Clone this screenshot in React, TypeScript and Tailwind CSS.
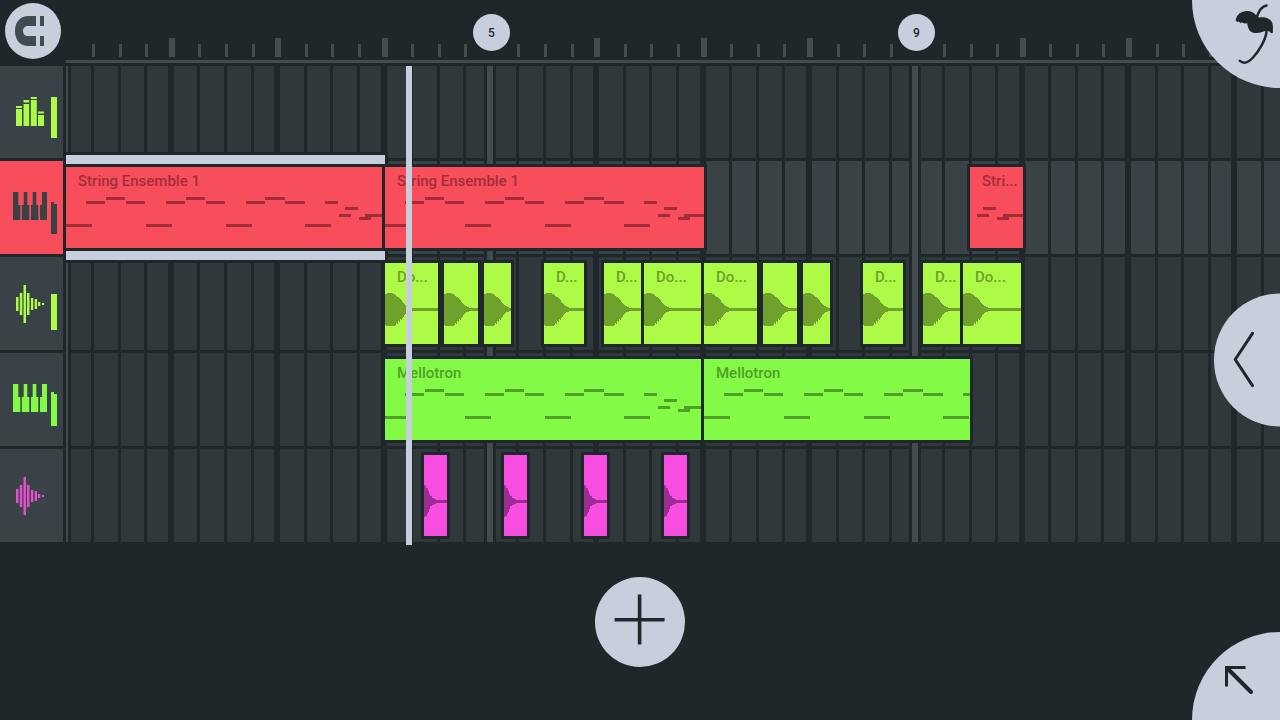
import { clsx } from 'clsx';

type TrackKind = 'master' | 'keys' | 'audio';

interface Clip {
  x: number;
  width: number;
  label?: string;
  // how far into the pattern the clip starts
  offset?: number;
  selected?: boolean;
}

interface Track {
  name: string;
  kind: TrackKind;
  active?: boolean;
  icon: string;
  level?: string;
  peak?: boolean;
  clipColor?: string;
  labelColor?: string;
  wave?: 'kick' | 'hat';
  clips: Clip[];
}

const BEAT = 26.59;
const ORIGIN = 64.95;
const LANE_LEFT = 66;
const BEATS = 120;
const SONG_BEATS = 48;

const tracks: Track[] = [
  { name: 'Master', kind: 'master', icon: 'text-[#adfb46]', level: 'h-[41px]', clips: [] },
  {
    name: 'String Ensemble 1',
    kind: 'keys',
    active: true,
    icon: 'text-[#384144]',
    level: 'h-[30px]',
    peak: true,
    clipColor: 'bg-[#f84e5c]',
    labelColor: 'text-[#a22d39]',
    clips: [
      { x: 0, width: 319, label: 'String Ensemble 1', selected: true },
      { x: 319, width: 319, label: 'String Ensemble 1' },
      { x: 904, width: 53, label: 'Stri...', offset: 266 },
    ],
  },
  {
    name: 'Kick',
    kind: 'audio',
    icon: 'text-[#adfb46]',
    level: 'h-[36px]',
    clipColor: 'bg-[#adfb46]',
    labelColor: 'text-[#6fa12c]',
    wave: 'kick',
    clips: [
      { x: 319, width: 53, label: 'Do...' },
      { x: 378, width: 34 },
      { x: 418, width: 27 },
      { x: 478, width: 40, label: 'D...' },
      { x: 538, width: 40, label: 'D...' },
      { x: 578, width: 60, label: 'Do...' },
      { x: 638, width: 53, label: 'Do...' },
      { x: 697, width: 34 },
      { x: 737, width: 27 },
      { x: 797, width: 40, label: 'D...' },
      { x: 857, width: 40, label: 'D...' },
      { x: 897, width: 58, label: 'Do...' },
    ],
  },
  {
    name: 'Mellotron',
    kind: 'keys',
    icon: 'text-[#83fa46]',
    level: 'h-[32px]',
    peak: true,
    clipColor: 'bg-[#83fa46]',
    labelColor: 'text-[#50a028]',
    clips: [
      { x: 319, width: 319, label: 'Mellotron' },
      { x: 638, width: 266, label: 'Mellotron' },
    ],
  },
  {
    name: 'Hat',
    kind: 'audio',
    icon: 'text-[#dd51cb]',
    clipColor: 'bg-[#f74de0]',
    labelColor: 'text-[#9f2c91]',
    wave: 'hat',
    clips: [
      { x: 358, width: 23 },
      { x: 438, width: 23 },
      { x: 518, width: 23 },
      { x: 598, width: 23 },
    ],
  },
];

// [start, end, y]
const notes = [
  [0, 26, 57], [80, 106, 57], [160, 186, 57], [239, 265, 57],
  [20, 39, 34], [60, 79, 34], [100, 119, 34], [140, 159, 34],
  [180, 199, 34], [219, 239, 34], [259, 272, 34],
  [40, 59, 30], [120, 139, 30], [199, 219, 30],
  [273, 285, 47], [279, 292, 40], [293, 305, 50], [299, 319, 47],
];

const waves = {
  kick: 'M0 31H2V30H8V31H10V32H11V33H12V34H14V35H15V36H16V37H17V39H18V40H19V41H20V42H21V43H23V44H25V45H400V48H25V49H22V50H21V51H20V52H19V54H18V55H17V57H16V56H15V59H14V58H13V61H12V60H11V62H10V63H1V62H0Z',
  hat: 'M0 30H1V31H2V33H4V36H5V39H6V41H8V43H10V44H12V45H400V48H12V49H10V50H8V51H6V54H5V57H4V59H3V61H1V62H0Z',
};

const isBar = (beat: number) => beat % 4 === 0;
const isMajor = (beat: number) => beat % 16 === 0;

function beatStart(beat: number) {
  const x = Math.floor(ORIGIN + beat * BEAT);
  if (isMajor(beat)) return Math.max(x - 6, LANE_LEFT);
  return isBar(beat) ? x - 3 : x;
}

const beats = Array.from({ length: BEATS }, (_, beat) => ({
  beat,
  width: beatStart(beat + 1) - beatStart(beat),
}));

function TrackIcon({ kind }: { kind: TrackKind }) {
  return (
    <svg width="34" height="38" viewBox="0 0 34 38" fill="currentColor">
      {kind === 'master' && (
        <>
          <path d="M3 15h6v17H3zM10.500 10h5.700v22h-5.700zM17.800 6h6v26h-6zM25 21h6v11h-6z" />
          <path d="M3 12h6v2H3zM10.500 6h5.700v2.500h-5.700zM17.800 3h6v2h-6zM25 17.500h6v2h-6z" />
        </>
      )}
      {kind === 'keys' && (
        <path d="M0 3h5.300v13h2v15H0zM10.700 3H14.300v13h2v15H8.800V16h1.900zM19.700 3h3.600v13h2v15h-7.300V16h1.700zM29 3h5.500v28h-7.500V16h2z" />
      )}
      {kind === 'audio' && (
        <path d="M3 12h2.500v14H3zM6.800 8h2.500v22h-2.500zM10.500 0h2.500v38h-2.500zM14 8h2.500v22H14zM17.900 13h2.400v12h-2.400zM21.700 14h2.400v10h-2.400zM25 17h2.200v4H25zM28.900 18h2.200v2h-2.200z" />
      )}
    </svg>
  );
}

function TrackHeader({ track }: { track: Track }) {
  return (
    <button
      aria-label={track.name}
      className={clsx(
        'flex justify-between pr-1.5 pl-[13px]',
        track.kind === 'master' ? 'h-[92px]' : 'h-[93px]',
        track.active ? 'bg-[#f84e5c]' : 'bg-[#394246]',
        track.icon
      )}
    >
      <span className="pt-7">
        <TrackIcon kind={track.kind} />
      </span>
      {track.level && (
        <span className="self-end pb-5">
          {track.peak && <span className="block h-0.5 w-[3px] bg-current" />}
          <span className={clsx('block w-1.5 bg-current', track.level)} />
        </span>
      )}
    </button>
  );
}

function Ruler() {
  return (
    <div className="h-[66px]">
      <div className="flex h-[57px] items-end">
        {beats.map(({ beat, width }) => (
          <div key={beat} className="relative flex h-full shrink-0 items-end pl-px" style={{ width }}>
            {!isMajor(beat) && (
              <span className={clsx('bg-[#434d50]', isBar(beat) ? 'h-[19px] w-1.5' : 'h-[13px] w-[3px]')} />
            )}
            {isMajor(beat) && beat > 0 && beat < SONG_BEATS && (
              <span className="absolute top-3.5 -left-[11px] flex size-[37px] items-center justify-center rounded-full bg-[#c8cfdc] text-xs font-medium text-[#20272a]">
                {beat / 4 + 1}
              </span>
            )}
          </div>
        ))}
      </div>
      <div className="mt-[3px] h-[3px] bg-[#434d50]" />
    </div>
  );
}

function GridLines() {
  return (
    <div className="pointer-events-none absolute inset-0 flex">
      {beats.map(({ beat, width }) => (
        <div key={beat} className="flex shrink-0" style={{ width }}>
          {isMajor(beat) ? (
            <span
              className={clsx(
                'border-r-[3px] border-[#20272a] bg-[#414b4e]',
                beat === 0 ? 'w-[5px]' : 'w-3 border-l-[3px]'
              )}
            />
          ) : (
            <span className={clsx('bg-[#20272a]', isBar(beat) ? 'w-1.5' : 'w-[3px]')} />
          )}
        </div>
      ))}
    </div>
  );
}

function ClipView({ clip, track }: { clip: Clip; track: Track }) {
  const offset = clip.offset ?? 0;

  return (
    <button
      aria-label={clip.label ?? track.name}
      className={clsx('absolute top-1.5 h-[81px] ring-[3px] ring-[#20272a]', track.clipColor, track.labelColor)}
      style={{ left: clip.x, width: clip.width }}
    >
      <svg className="absolute inset-0 size-full" fill="currentColor" shapeRendering="crispEdges" aria-hidden="true">
        {track.wave ? (
          <path d={waves[track.wave]} />
        ) : (
          notes
            .filter(([start]) => start >= offset)
            .map(([start, end, y]) => (
              <rect key={`${start}-${y}`} x={start - offset} y={y} width={end - start} height="3" />
            ))
        )}
      </svg>
      {clip.label && (
        <span className="absolute top-1 left-3 text-[15px] leading-5 font-medium whitespace-nowrap">{clip.label}</span>
      )}
      {clip.selected && (
        <>
          <span className="absolute inset-x-0 -top-3 h-[9px] bg-[#c8cfdc] ring-[3px] ring-[#20272a]" />
          <span className="absolute inset-x-0 -bottom-3 h-[9px] bg-[#c8cfdc] ring-[3px] ring-[#20272a]" />
        </>
      )}
    </button>
  );
}

function Timeline() {
  return (
    <div className="relative pb-[3px]">
      <div className="flex flex-col gap-[3px]">
        {tracks.map((track) => (
          <div
            key={track.name}
            className={clsx(
              track.kind === 'master' ? 'h-[92px]' : 'h-[93px]',
              track.active ? 'bg-[#394246]' : 'bg-[#2f383b]'
            )}
          />
        ))}
      </div>
      <div className="absolute inset-x-0 top-0 bottom-[3px]">
        <GridLines />
      </div>
      <div className="absolute inset-0 flex flex-col gap-[3px]">
        {tracks.map((track) => (
          <div key={track.name} className={clsx('relative', track.kind === 'master' ? 'h-[92px]' : 'h-[93px]')}>
            {track.clips.map((clip) => (
              <ClipView key={clip.x} clip={clip} track={track} />
            ))}
          </div>
        ))}
      </div>
      <div className="absolute inset-y-0 left-[340px] w-1.5 bg-[#c8cfdc]" />
    </div>
  );
}

export default function App() {
  return (
    <div className="relative min-h-screen overflow-hidden bg-[#20272a] font-[Roboto,sans-serif]">
      <div className="grid grid-cols-[63px_minmax(0,1fr)] gap-x-[3px]">
        <div>
          <div className="h-[66px] pt-[3px] pl-[5px]">
            <button aria-label="Snap" className="size-14 rounded-full bg-[#c8cfdc]">
              <svg width="56" height="56" viewBox="5 3 56 56" fill="#414c50">
                <path d="M36 16h-7c-9 0-14 6-14 15s5 15 14 15h7V36h-8c-3 0-5-2-5-5s2-5 5-5h8z" />
                <path d="M40 16h4v10h-4zM40 36h4v10h-4z" />
              </svg>
            </button>
          </div>
          <div className="flex flex-col gap-[3px]">
            {tracks.map((track) => (
              <TrackHeader key={track.name} track={track} />
            ))}
          </div>
        </div>
        <div className="overflow-hidden">
          <Ruler />
          <Timeline />
        </div>
      </div>

      <div className="flex justify-center pt-8 pb-10">
        <button aria-label="Add track" className="size-[90px] rounded-full bg-[#c8cfdc]">
          <svg width="90" height="90" viewBox="0 0 90 90" fill="none" stroke="#20272a" strokeWidth="3.6">
            <path d="M44.6 17.5v50M19.6 42.7h50" />
          </svg>
        </button>
      </div>

      <button
        aria-label="Home"
        className="absolute top-0 right-0 flex size-[88px] justify-end rounded-bl-[88px] bg-[#c8cfdc]"
      >
        <svg width="48" height="66" viewBox="0 0 48 66" fill="#20272a">
          <path d="M3.6 20.8C4.5 14.5 9 11 15 11C19 11 22.5 12.5 24.7 16L27 17.6C34 16.5 40.5 19 40.9 26V32.6C40 33.6 38.3 33.3 38 31.8C35 30.6 32.5 31 30 32C26 33.5 20.5 33.5 18 31C16 28.5 15.5 25.5 15.3 23.3L12.5 23.6L9.5 22.2L8.5 23.2L7 21.6L5.6 22Z" />
          <g fill="none" stroke="#20272a" strokeWidth="2.5" strokeLinecap="round">
            <path d="M34.5 5.6C30 6.5 27 10.5 25 16.500" />
            <path d="M34.5 32C33.5 40 27 51 21 57.5C16 63 11.500 64 7.800 60.900" />
          </g>
        </svg>
      </button>

      <button
        aria-label="Open panel"
        className="absolute top-1/2 right-0 h-[133px] w-[66px] -translate-y-1/2 rounded-l-full bg-[#c8cfdc]"
      >
        <svg width="66" height="133" viewBox="0 0 66 133" fill="none" stroke="#20272a" strokeWidth="3" strokeLinecap="round" strokeLinejoin="round">
          <path d="M38.5 39.8L21.2 66L38.5 92.2" />
        </svg>
      </button>

      <button aria-label="Expand" className="absolute right-0 bottom-0 size-[88px] rounded-tl-[88px] bg-[#c8cfdc]">
        <svg width="88" height="88" viewBox="0 0 88 88" fill="none" stroke="#20272a">
          <path d="M34.5 54.5V35.5H53.5" strokeWidth="3" />
          <path d="M35.5 36.5L59 60" strokeWidth="4" strokeLinecap="round" />
        </svg>
      </button>
    </div>
  );
}
